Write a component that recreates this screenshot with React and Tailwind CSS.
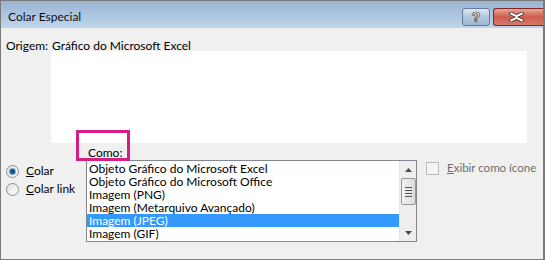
import React from "react";

const ui = { fontFamily: 'Lato, "Segoe UI", "Liberation Sans", sans-serif' };

function Radio({ checked }) {
  return (
    <span className="relative inline-block shrink-0 w-[13px] h-[13px] rounded-full border border-[#8e8f8f] bg-gradient-to-br from-[#e2e2e2] to-[#ffffff]">
      {checked && (
        <span className="absolute left-[3px] top-[3px] w-[5px] h-[5px] rounded-full bg-[#1b4d8c] shadow-[0_0_1px_1px_#6da2d8]" />
      )}
    </span>
  );
}

function Arrow({ up }) {
  return (
    <svg width="7" height="4" viewBox="0 0 7 4">
      {up ? <path d="M0 4 L3.5 0 L7 4 Z" fill="#4a4a4a" /> : <path d="M0 0 L7 0 L3.5 4 Z" fill="#4a4a4a" />}
    </svg>
  );
}

export default function App() {
  const items = [
    "Objeto Gráfico do Microsoft Excel",
    "Objeto Gráfico do Microsoft Office",
    "Imagem (PNG)",
    "Imagem (Metarquivo Avançado)",
    "Imagem (JPEG)",
    "Imagem (GIF)",
  ];
  return (
    <div className="w-[545px] h-[260px] overflow-hidden border-t border-l border-b border-r-2 border-[#7a7a7a] bg-[#f0f0f0] flex flex-col text-[12px] text-black" style={ui}>
      <div className="h-[27px] shrink-0 bg-gradient-to-b from-[#9ab5d2] to-[#bed5ec] flex items-center justify-between pl-[7px]">
        <span className="text-[12px] leading-none pt-[5px] text-[#111] whitespace-nowrap">Colar Especial</span>
        <div className="flex items-center gap-[3px] pt-[5px]">
          <div className="w-[28px] h-[18px] rounded-[3px] border border-[#6b7d96] bg-gradient-to-b from-[#dbe6f2] via-[#b3c7dd] to-[#9fb8d4] flex items-center justify-center">
            <span className="text-white font-bold text-[14px] leading-none" style={{ fontFamily: '"Liberation Sans", sans-serif', WebkitTextStroke: "0.7px #3a3a3a" }}>?</span>
          </div>
          <div className="w-[50px] h-[18px] rounded-l-[3px] border border-r-0 border-[#7a2a22] bg-gradient-to-b from-[#e8a49a] via-[#cf5a4a] to-[#d67a6c] flex items-center justify-center pr-[4px]">
            <svg width="15" height="10" viewBox="0 0 15 10">
              <path d="M2 1.5 L7.5 4.2 L13 1.5 M2 8.5 L7.5 5.8 L13 8.5" stroke="#3a2a2a" strokeWidth="3.6" fill="none" strokeLinecap="round" />
              <path d="M2 1.5 L7.5 4.2 L13 1.5 M2 8.5 L7.5 5.8 L13 8.5" stroke="#ffffff" strokeWidth="2" fill="none" strokeLinecap="round" />
            </svg>
          </div>
        </div>
      </div>

      <div className="flex pl-[5px] pt-[11px] leading-[14px] whitespace-nowrap">
        <span className="w-[46px] shrink-0">Origem:</span>
        <span>Gráfico do Microsoft Excel</span>
      </div>
      <div className="ml-[50px] mt-[-2px] w-[476px] h-[92px] bg-white" />

      <div className="flex">
        <div className="w-[85px] shrink-0 pl-[5px] pt-[21px] flex flex-col gap-[4px] whitespace-nowrap">
          <label className="flex items-center gap-[7px] leading-[14px]">
            <Radio checked />
            <span><u>C</u>olar</span>
          </label>
          <label className="flex items-center gap-[7px] leading-[14px]">
            <Radio />
            <span><u>C</u>olar link</span>
          </label>
        </div>

        <div className="relative flex flex-col shrink-0">
          <div className="h-[17px] pl-[2px] pt-[3px] leading-[14px]"><u>C</u>omo:</div>
          <div className="absolute left-[-10px] top-[-13px] w-[54px] h-[31px] border-[3px] border-[#d41f86]" />
          <div className="w-[331px] h-[82px] border border-[#828790] bg-white flex">
            <div className="flex-1 pt-[1px] flex flex-col text-[12px] overflow-hidden">
              {items.map((t, i) => (
                <div key={i} className={`h-[13px] leading-[13px] pl-[2px] whitespace-nowrap ${i === 4 ? "bg-[#3399ff] text-white" : "text-black"}`}>{t}</div>
              ))}
            </div>
            <div className="w-[17px] bg-[#eeeeee] border-l border-[#e4e4e4] flex flex-col items-center">
              <div className="h-[17px] flex items-center justify-center"><Arrow up /></div>
              <div className="w-[15px] h-[27px] rounded-[2px] border border-[#979797] bg-gradient-to-r from-[#f3f3f3] to-[#dcdcdc] flex flex-col items-center justify-center gap-[2px]">
                <span className="w-[7px] h-[1px] bg-[#555]" />
                <span className="w-[7px] h-[1px] bg-[#555]" />
                <span className="w-[7px] h-[1px] bg-[#555]" />
                <span className="w-[7px] h-[1px] bg-[#555]" />
              </div>
              <div className="flex-1" />
              <div className="h-[17px] flex items-center justify-center"><Arrow /></div>
            </div>
          </div>
        </div>

        <div className="pl-[9px] pt-[18px] whitespace-nowrap">
          <label className="flex items-center gap-[8px] leading-[14px] text-[#6d6d6d]">
            <span className="w-[13px] h-[13px] shrink-0 border border-[#bcbcbc] bg-[#f4f4f4]" />
            <span className="text-[11.5px]"><u>E</u>xibir como ícone</span>
          </label>
        </div>
      </div>
    </div>
  );
}
